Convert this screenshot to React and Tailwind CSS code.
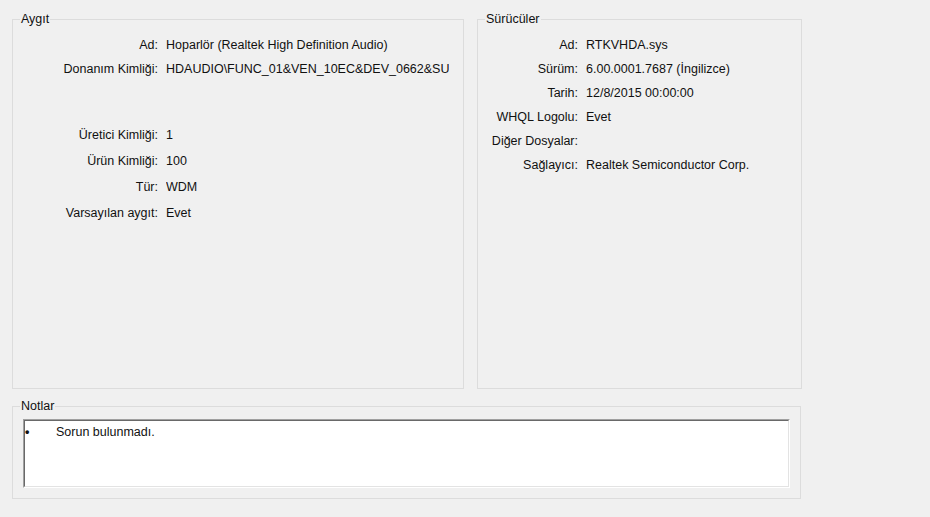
export default function App() {
  const deviceTop = [
    ["Ad:", "Hoparlör (Realtek High Definition Audio)"],
    ["Donanım Kimliği:", "HDAUDIO\\FUNC_01&VEN_10EC&DEV_0662&SUBSYS_10EC0662&REV_1001"],
  ];
  const deviceBottom = [
    ["Üretici Kimliği:", "1"],
    ["Ürün Kimliği:", "100"],
    ["Tür:", "WDM"],
    ["Varsayılan aygıt:", "Evet"],
  ];
  const drivers = [
    ["Ad:", "RTKVHDA.sys"],
    ["Sürüm:", "6.00.0001.7687 (İngilizce)"],
    ["Tarih:", "12/8/2015 00:00:00"],
    ["WHQL Logolu:", "Evet"],
    ["Diğer Dosyalar:", ""],
    ["Sağlayıcı:", "Realtek Semiconductor Corp."],
  ];

  return (
    <div
      className="w-[930px] h-[517px] bg-[#f0f0f0] text-[12.5px] text-[#111] px-[12px] pt-[13px] overflow-hidden"
      style={{ fontFamily: '"Liberation Sans", Arial, sans-serif' }}
    >
      <div className="flex gap-[13px]">
        {/* Aygıt */}
        <fieldset className="w-[452px] h-[376px] border border-[#dcdcdc]">
          <legend className="ml-[7px] px-[1px] leading-[13px]">Aygıt</legend>
          <div className="pt-[7px]">
            {deviceTop.map(([k, v]) => (
              <div key={k} className="flex items-center h-[24px]">
                <div className="w-[145px] text-right shrink-0">{k}</div>
                <div className="ml-[8px] w-[283px] whitespace-nowrap overflow-hidden">{v}</div>
              </div>
            ))}
            <div className="h-[41px]" />
            {deviceBottom.map(([k, v]) => (
              <div key={k} className="flex items-center h-[26px]">
                <div className="w-[145px] text-right shrink-0">{k}</div>
                <div className="ml-[8px] w-[283px] whitespace-nowrap overflow-hidden">{v}</div>
              </div>
            ))}
          </div>
        </fieldset>

        {/* Sürücüler */}
        <fieldset className="w-[325px] h-[376px] border border-[#dcdcdc]">
          <legend className="ml-[7px] px-[1px] leading-[13px]">Sürücüler</legend>
          <div className="pt-[7px]">
            {drivers.map(([k, v]) => (
              <div key={k} className="flex items-center h-[24px]">
                <div className="w-[100px] text-right shrink-0">{k}</div>
                <div className="ml-[8px] w-[210px] whitespace-nowrap overflow-hidden">{v}</div>
              </div>
            ))}
          </div>
        </fieldset>
      </div>

      {/* Notlar */}
      <fieldset className="mt-[11px] w-[789px] h-[99px] border border-[#dcdcdc]">
        <legend className="ml-[7px] px-[1px] leading-[13px]">Notlar</legend>
        <div className="ml-[10px] mt-[6px] w-[767px] h-[69px] border border-t-[#a0a0a0] border-l-[#a0a0a0] border-r-white border-b-white">
          <div className="h-full bg-white border border-t-[#696969] border-l-[#696969] border-r-[#e3e3e3] border-b-[#e3e3e3]">
            <div className="flex pt-[2px]">
              <span className="w-[31px] shrink-0 font-bold">•</span>
              <span>Sorun bulunmadı.</span>
            </div>
          </div>
        </div>
      </fieldset>
    </div>
  );
}
